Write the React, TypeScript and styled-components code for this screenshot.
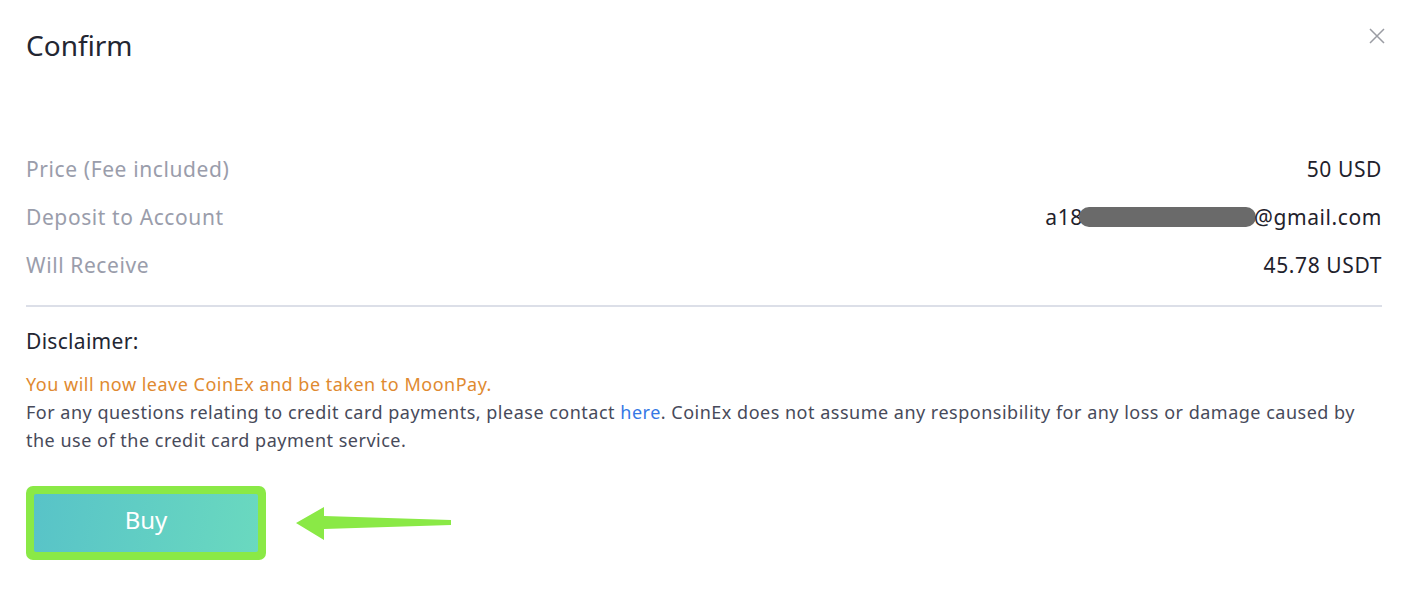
import React from "react";
import styled, { createGlobalStyle } from "styled-components";

const Global = createGlobalStyle`
  html, body { margin: 0; padding: 0; background: #fff; }
  body { font-family: "Noto Sans", "Open Sans", sans-serif; }
`;

const Dialog = styled.div`
  position: relative;
  width: 1406px;
  height: 590px;
  box-sizing: border-box;
  padding: 25px 24px 0 26px;
  background: #fff;
`;

const Title = styled.h1`
  margin: 0;
  font-size: 28px;
  font-weight: 400;
  line-height: 40px;
  color: #232632;
`;

const Close = styled.button`
  position: absolute;
  top: 28px;
  right: 21px;
  width: 16px;
  height: 16px;
  padding: 0;
  border: 0;
  background: none;
  cursor: pointer;
`;

const Rows = styled.div`
  display: flex;
  flex-direction: column;
  margin-top: 80px;
  padding-bottom: 16px;
  border-bottom: 2px solid #dcdfe8;
`;

const Row = styled.div`
  display: flex;
  justify-content: space-between;
  align-items: center;
  height: 48px;
  font-size: 21px;
  letter-spacing: 0.6px;
`;

const Label = styled.span`
  color: #9a9dab;
`;

const Value = styled.span`
  color: #1f222c;
  display: inline-flex;
  align-items: center;
`;

const Redact = styled.span`
  display: inline-block;
  width: 177px;
  height: 20px;
  border-radius: 10px;
  background: #6a6a6a;
  margin: 0 -2px 0 -4px;
`;

const DisclaimerTitle = styled.div`
  margin-top: 19px;
  font-size: 21px;
  letter-spacing: 0.3px;
  line-height: 30px;
  color: #232632;
`;

const Text = styled.p`
  margin: 14px 0 0;
  font-size: 18px;
  letter-spacing: 0.5px;
  line-height: 28px;
  color: #474a5a;
`;

const Warn = styled.span`
  color: #df8a30;
`;

const Link = styled.a`
  color: #3578e5;
  text-decoration: none;
`;

const Actions = styled.div`
  display: flex;
  align-items: center;
  margin-top: 32px;
  gap: 30px;
`;

const Highlight = styled.div`
  padding: 8px;
  background: #8ae946;
  border-radius: 7px;
`;

const BuyButton = styled.button`
  display: block;
  width: 224px;
  height: 58px;
  padding: 0 0 7px;
  border: 0;
  border-radius: 2px;
  background: linear-gradient(100deg, #58c3c8 0%, #6ad9bf 100%);
  color: #fff;
  font-family: inherit;
  font-size: 24px;
  font-weight: 400;
  cursor: pointer;
`;

export default function App() {
  return (
    <>
      <Global />
      <Dialog>
        <Title>Confirm</Title>
        <Close aria-label="close">
          <svg width="16" height="16" viewBox="0 0 16 16">
            <path d="M1 1L15 15M15 1L1 15" stroke="#9a9ca3" strokeWidth="1.5" />
          </svg>
        </Close>
        <Rows>
          <Row>
            <Label>Price (Fee included)</Label>
            <Value>50 USD</Value>
          </Row>
          <Row>
            <Label>Deposit to Account</Label>
            <Value>
              a18<Redact />@gmail.com
            </Value>
          </Row>
          <Row>
            <Label>Will Receive</Label>
            <Value>45.78 USDT</Value>
          </Row>
        </Rows>
        <DisclaimerTitle>Disclaimer:</DisclaimerTitle>
        <Text>
          <Warn>You will now leave CoinEx and be taken to MoonPay.</Warn>
          <br />
          For any questions relating to credit card payments, please contact{" "}
          <Link href="#">here</Link>. CoinEx does not assume any responsibility for any loss or
          damage caused by the use of the credit card payment service.
        </Text>
        <Actions>
          <Highlight>
            <BuyButton>Buy</BuyButton>
          </Highlight>
          <svg width="160" height="36" viewBox="0 0 160 36">
            <path d="M0 18 L28 2 L28 11 L155 15 L155 20 L28 24 L28 35 Z" fill="#8ae946" />
          </svg>
        </Actions>
      </Dialog>
    </>
  );
}
